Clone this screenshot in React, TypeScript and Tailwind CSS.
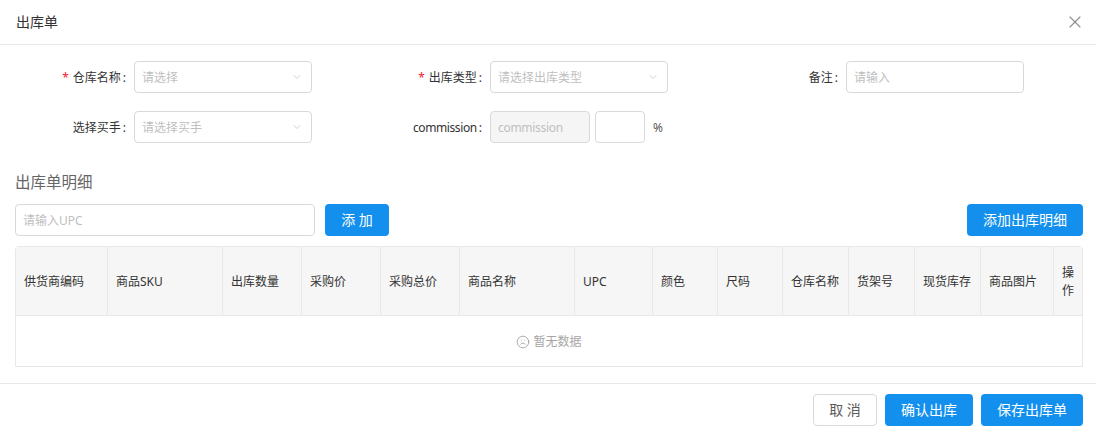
import React from "react";
import { ChevronDown, Frown, X } from "lucide-react";

const font = "font-['Noto_Sans','Noto_Sans_CJK_SC',sans-serif]";

function Label({ text, required, tight }: { text: string; required?: boolean; tight?: boolean }) {
  return (
    <div className="w-[118px] shrink-0 pr-2 pt-[2px] flex items-center justify-end text-xs text-[#333333]">
      {required && <span className="mr-1 text-[#f5222d]">*</span>}
      <span className={tight ? "tracking-[-0.4px]" : ""}>{text}</span>
      <span className="ml-[2px]">:</span>
    </div>
  );
}

function Select({ placeholder }: { placeholder: string }) {
  return (
    <div className="w-[178px] h-8 flex items-center justify-between pl-[7px] pr-2 border border-[#d9d9d9] rounded bg-white">
      <span className="text-xs text-[#bfbfbf] pt-[2px]">{placeholder}</span>
      <ChevronDown size={12} strokeWidth={1.4} className="text-[#bfbfbf]" />
    </div>
  );
}

function Input({ placeholder, className }: { placeholder?: string; className: string }) {
  return (
    <div className={`h-8 flex items-center pl-[7px] pt-[2px] border border-[#d9d9d9] rounded text-xs text-[#bfbfbf] ${className}`}>
      {placeholder}
    </div>
  );
}

function Btn({ children, className }: { children: React.ReactNode; className: string }) {
  return (
    <button className={`h-8 rounded bg-[#1390ee] text-sm text-white flex items-center justify-center ${className}`}>
      {children}
    </button>
  );
}

const cols: [string, string][] = [
  ["供货商编码", "w-[92px]"],
  ["商品SKU", "w-[115px]"],
  ["出库数量", "w-[79px]"],
  ["采购价", "w-[79px]"],
  ["采购总价", "w-[79px]"],
  ["商品名称", "w-[115px]"],
  ["UPC", "w-[78px]"],
  ["颜色", "w-[65px]"],
  ["尺码", "w-[65px]"],
  ["仓库名称", "w-[66px]"],
  ["货架号", "w-[66px]"],
  ["现货库存", "w-[66px]"],
  ["商品图片", "w-[73px]"],
];

export default function App() {
  return (
    <div className={`w-[1096px] h-[433px] bg-white overflow-hidden flex flex-col ${font}`}>
      <header className="h-[45px] shrink-0 flex items-center justify-between pl-4 pr-[11px] border-b border-[#e8e8e8]">
        <span className="text-sm text-[#333333]">出库单</span>
        <X size={20} strokeWidth={1.3} className="text-[#8c8c8c]" />
      </header>

      <main className="flex-1 pl-[15px] pr-[13px] pt-4 flex flex-col">
        <div className="flex h-8 pl-px">
          <div className="w-[356px] shrink-0 flex">
            <Label text="仓库名称" required />
            <Select placeholder="请选择" />
          </div>
          <div className="w-[356px] shrink-0 flex">
            <Label text="出库类型" required />
            <Select placeholder="请选择出库类型" />
          </div>
          <div className="w-[356px] shrink-0 flex">
            <Label text="备注" />
            <Input placeholder="请输入" className="w-[178px]" />
          </div>
        </div>
        <div className="flex h-8 pl-px mt-[18px]">
          <div className="w-[356px] shrink-0 flex">
            <Label text="选择买手" />
            <Select placeholder="请选择买手" />
          </div>
          <div className="w-[356px] shrink-0 flex">
            <Label text="commission" tight />
            <Input placeholder="commission" className="w-[100px] bg-[#f5f5f5] tracking-[-0.3px]" />
            <Input className="w-[50px] ml-[5px] bg-white" />
            <span className="ml-2 pt-px text-xs text-[#595959] leading-8">%</span>
          </div>
        </div>

        <h2 className="mt-[27px] h-6 text-[15.5px] leading-6 font-normal text-[#666666]">出库单明细</h2>

        <div className="mt-[10px] flex items-center">
          <Input placeholder="请输入UPC" className="w-[300px]" />
          <Btn className="w-16 ml-[10px]">添 加</Btn>
          <Btn className="w-[116px] ml-auto">添加出库明细</Btn>
        </div>

        <div className="mt-[10px] w-[1068px] border border-[#e8e8e8] rounded-t">
          <div className="flex h-[69px] bg-[#f6f6f6] border-b border-[#e8e8e8] text-xs text-[#333333]">
            {cols.map(([t, w]) => (
              <div key={t} className={`${w} shrink-0 flex items-center pl-2 pt-[2px] border-r border-[#e8e8e8]`}>
                {t}
              </div>
            ))}
            <div className="flex-1 flex items-center justify-center pt-[2px] text-center leading-[18px]">
              操<br />作
            </div>
          </div>
          <div className="h-[50px] pt-[2px] flex items-center justify-center gap-[3px] text-xs text-[#a6a6a6]">
            <Frown size={14} strokeWidth={1.2} className="text-[#8c8c8c]" />
            <span>暂无数据</span>
          </div>
        </div>
      </main>

      <footer className="h-[50px] shrink-0 border-t border-[#e8e8e8] px-[13px] pt-[10px] flex justify-end gap-2">
        <button className="w-16 h-8 rounded border border-[#d9d9d9] bg-white text-sm text-[#595959]">取 消</button>
        <Btn className="w-[88px]">确认出库</Btn>
        <Btn className="w-[102px]">保存出库单</Btn>
      </footer>
    </div>
  );
}
